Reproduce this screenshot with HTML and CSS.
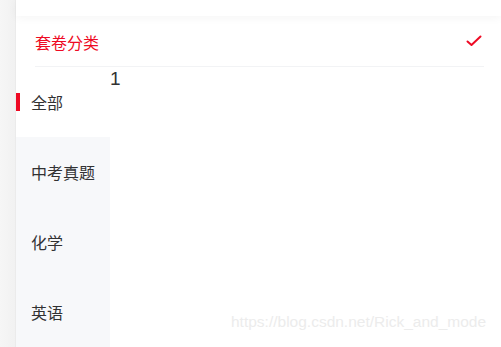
FILE: index.html
```html
<!DOCTYPE html>
<html lang="zh">
<head>
<meta charset="utf-8">
<link rel="stylesheet" href="styles.css">
</head>
<body>
<div class="page">
  <div class="gutter"></div>
  <div class="main">
    <div class="topbar"></div>
    <div class="header">
      <span class="header-title">套卷分类</span>
      <svg class="check" width="16" height="12" viewBox="0 0 16 12"><path d="M1.5 6.5 L5.5 10 L14.5 1.5" fill="none" stroke="#ee0a24" stroke-width="2" stroke-linecap="round" stroke-linejoin="round"/></svg>
    </div>
    <div class="tree">
      <div class="sidebar">
        <div class="item active">全部</div>
        <div class="item">中考真题</div>
        <div class="item">化学</div>
        <div class="item">英语</div>
      </div>
      <div class="content">1</div>
    </div>
  </div>
  <div class="watermark">https://blog.csdn.net/Rick_and_mode</div>
</div>
</body>
</html>
```
FILE: styles.css
```css
html, body {
  margin: 0;
  padding: 0;
  background: #fff;
}
body {
  font-family: "Noto Sans CJK SC", "Liberation Sans", sans-serif;
  color: #323233;
}
.page {
  position: relative;
  display: flex;
  width: 501px;
  height: 347px;
  overflow: hidden;
}
.gutter {
  width: 16px;
  flex: none;
  background: linear-gradient(to right, #f6f6f6, #f1f1f1);
  box-shadow: inset -1px 0 0 #ebebeb;
}
.main {
  flex: 1;
  display: flex;
  flex-direction: column;
  background: #fff;
}
.topbar {
  height: 16px;
  flex: none;
  background: #fff;
  position: relative;
  z-index: 1;
  box-shadow: 0 2px 10px rgba(0, 0, 0, 0.045);
}
.header {
  height: 49px;
  flex: none;
  margin: 0 17px 0 19px;
  display: flex;
  align-items: center;
  justify-content: space-between;
  border-bottom: 1px solid #f2f3f5;
  padding-top: 1px;
}
.header-title {
  color: #ee0a24;
  font-size: 16px;
  line-height: 20px;
}
.check {
  margin-right: 2px;
  margin-bottom: 2px;
}
.tree {
  flex: 1;
  display: flex;
}
.sidebar {
  width: 94px;
  flex: none;
  background: #f7f8fa;
}
.item {
  position: relative;
  height: 70px;
  display: flex;
  align-items: center;
  padding-left: 15px;
  font-size: 16px;
  color: #323233;
}
.item.active {
  background: #fff;
}
.item.active::before {
  content: "";
  position: absolute;
  left: 0;
  top: 26px;
  width: 4px;
  height: 18px;
  background: #ee0a24;
}
.content {
  flex: 1;
  font-family: "Liberation Sans", sans-serif;
  font-size: 19px;
  line-height: 24px;
  padding-left: 0;
  color: #323233;
}
.watermark {
  position: absolute;
  left: 231px;
  top: 312px;
  font-family: "Liberation Sans", sans-serif;
  font-size: 15.5px;
  line-height: 20px;
  color: #ececec;
  white-space: nowrap;
}
```
